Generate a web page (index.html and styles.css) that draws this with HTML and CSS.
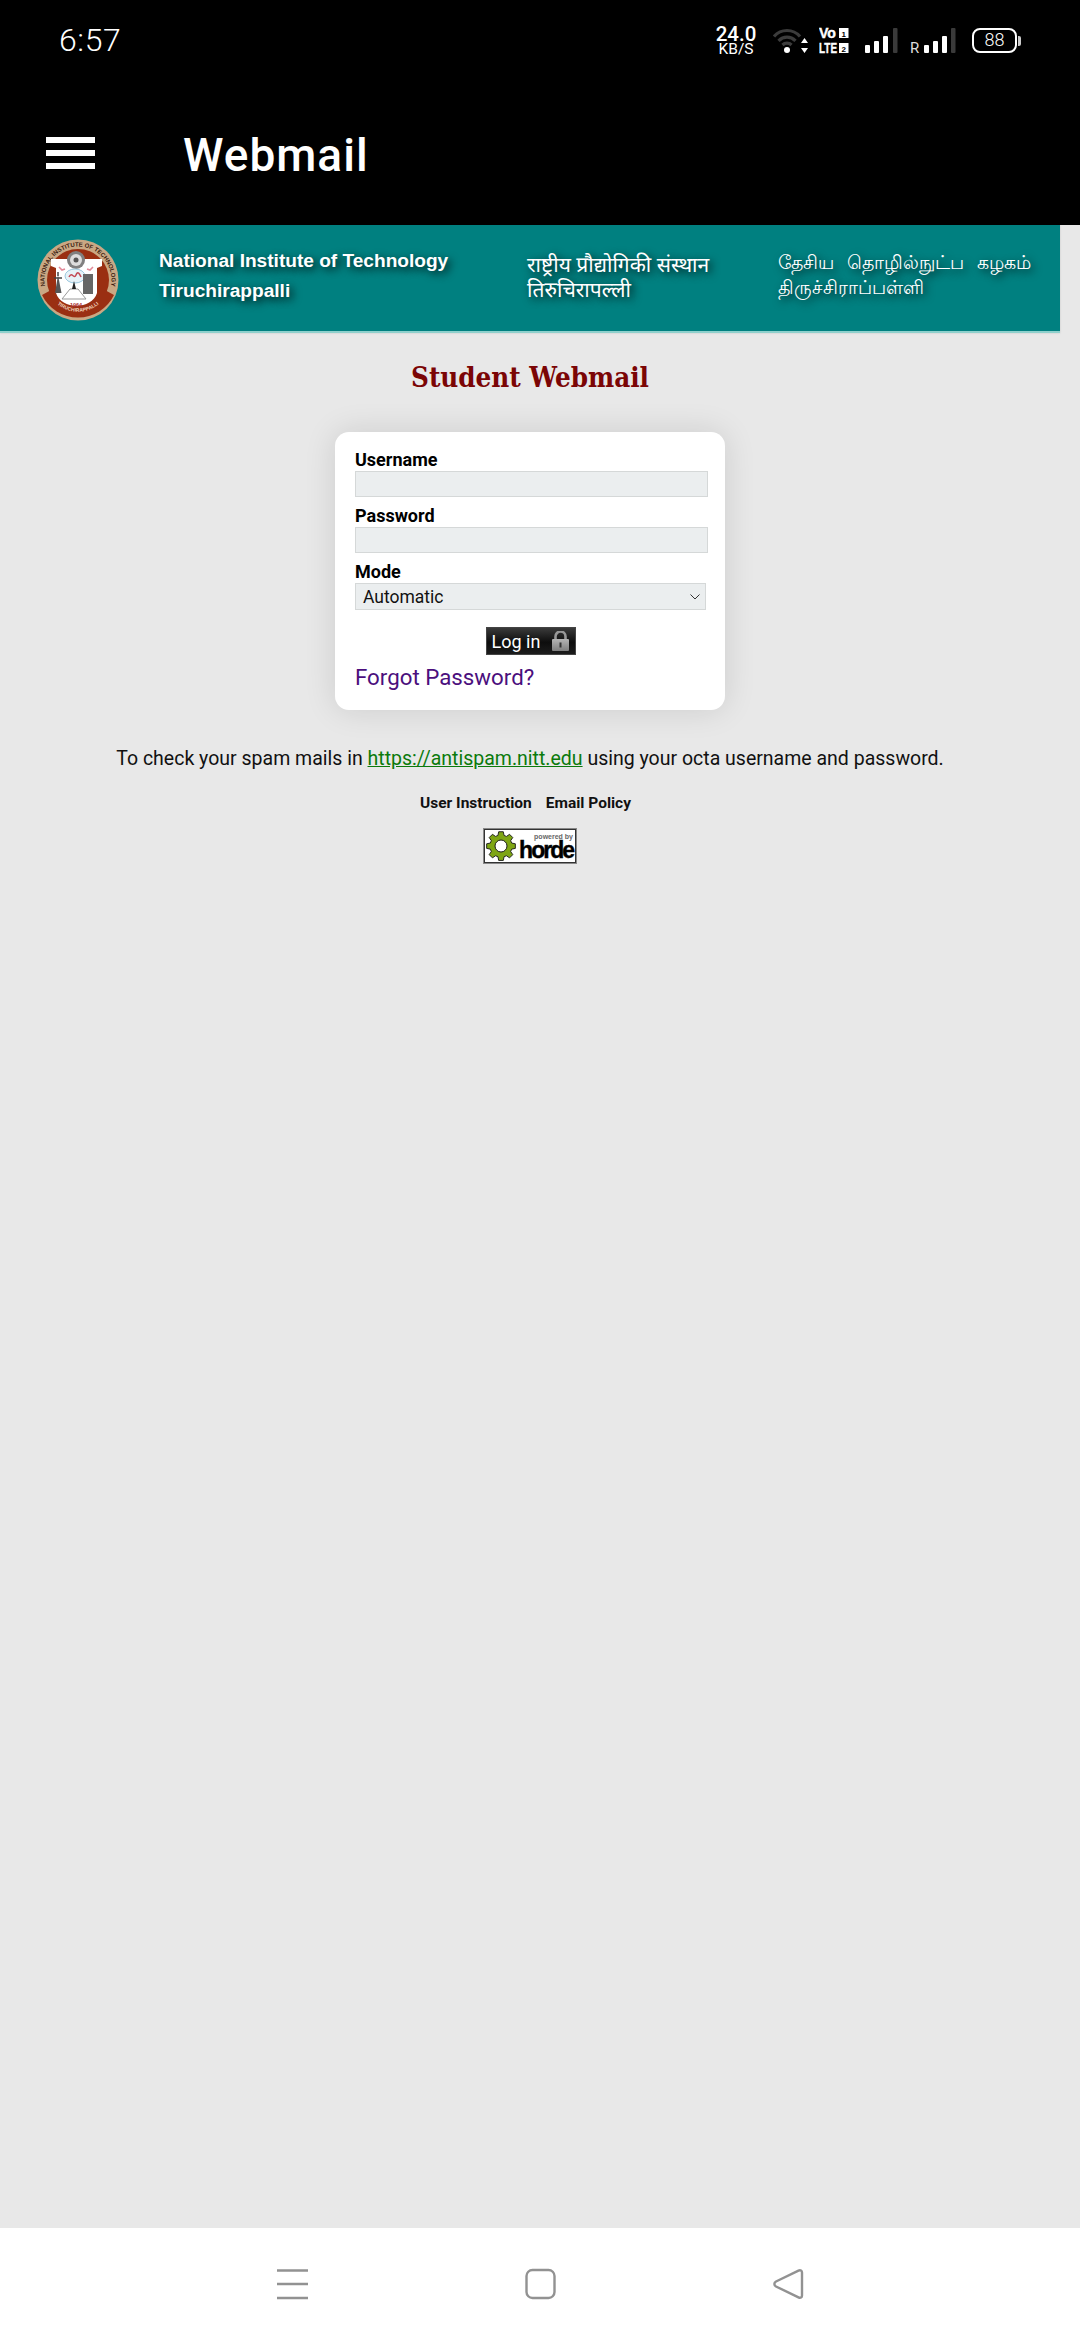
FILE: index.html
```html
<!DOCTYPE html>
<html lang="en">
<head>
<meta charset="utf-8">
<title>Webmail</title>
<link rel="stylesheet" href="styles.css">
</head>
<body>
<div class="phone">
  <header class="top">
    <div class="status">
      <span class="time">6:57</span>
      <div class="status-icons">
        <div class="speed"><span class="speed-num">24.0</span><span class="speed-unit">KB/S</span></div>
        <svg class="ic-wifi" width="35" height="25" viewBox="0 0 35 25">
          <g fill="none" stroke="#3c3c3c" stroke-width="3.200">
            <path d="M1 8.500C8 .5 20 .5 27 8.500"/>
            <path d="M5.500 12.800C10.500 7.800 17.500 7.800 22.500 12.800"/>
            <path d="M9.500 17C12 14.500 16 14.500 18.500 17"/>
          </g>
          <circle cx="14" cy="22" r="3" fill="#fff"/>
          <path d="M31.500 10L35 15H28zM31.500 25L28 20H35z" fill="#fff"/>
        </svg>
        <svg class="ic-volte" width="31" height="33" viewBox="0 -4 31 33">
          <text x="0" y="10" class="vl" textLength="17" lengthAdjust="spacingAndGlyphs">Vo</text>
          <text x="0" y="25" class="vl" textLength="18" lengthAdjust="spacingAndGlyphs">LTE</text>
          <rect x="20" y="0" width="9.500" height="10" fill="#fff"/>
          <rect x="20" y="15" width="9.500" height="10" fill="#fff"/>
          <text x="24.700" y="8.500" class="vn">1</text>
          <text x="24.700" y="23.500" class="vn">2</text>
        </svg>
        <svg class="ic-signal" width="33" height="25" viewBox="0 0 33 25">
          <rect x="0" y="17" width="5" height="8" rx="1" fill="#fff"/>
          <rect x="9" y="13" width="5" height="12" rx="1" fill="#fff"/>
          <rect x="18" y="8" width="5" height="17" rx="1" fill="#fff"/>
          <rect x="28" y="0" width="4.500" height="25" rx="1" fill="#3a3a3a"/>
        </svg>
        <svg class="ic-signal-r" width="46" height="33" viewBox="0 -4 46 33">
          <text x="0" y="25" class="roam">R</text>
          <rect x="14" y="17" width="5" height="8" rx="1" fill="#fff"/>
          <rect x="23" y="13" width="5" height="12" rx="1" fill="#fff"/>
          <rect x="32" y="8" width="5" height="17" rx="1" fill="#fff"/>
          <rect x="41" y="0" width="4.500" height="25" rx="1" fill="#3a3a3a"/>
        </svg>
        <div class="battery"><div class="battery-body">88</div><div class="battery-tip"></div></div>
      </div>
    </div>
    <div class="appbar">
      <div class="burger"><span></span><span></span><span></span></div>
      <h1 class="app-title">Webmail</h1>
    </div>
  </header>

  <main class="web">
    <div class="banner">
      <svg class="crest" width="82" height="82" viewBox="0 0 82 82">
        <defs>
          <path id="arcTop" d="M11.400 56.700A33.500 33.500 0 1 1 70.600 56.700"/>
          <path id="arcBottom" d="M14 58A32 32 0 0 0 68 58"/>
        </defs>
        <circle cx="41" cy="41" r="40.500" fill="#c9a884"/>
        <circle cx="41" cy="41" r="31" fill="#9a2f12"/>
        <path d="M5 56A40 40 0 0 0 77 56L66 50H16z" fill="#9a2f12"/>
        <text class="crest-t"><textPath href="#arcTop" startOffset="50%">NATIONAL INSTITUTE OF TECHNOLOGY</textPath></text>
        <text class="crest-b"><textPath href="#arcBottom" startOffset="50%">TIRUCHIRAPPALLI</textPath></text>
        <path d="M14 20H65V27L60 29V54C55 71 24 71 19 54V29L14 27z" fill="#fff"/>
        <circle cx="39" cy="21" r="9" fill="#808080"/>
        <circle cx="39" cy="21" r="6" fill="#ddd"/>
        <circle cx="39" cy="21" r="2.500" fill="#555"/>
        <ellipse cx="38" cy="37" rx="10" ry="7" fill="#e6f2f8" stroke="#9cc8df"/>
        <path d="M32 38c3-6 5 3 7-2s4 0 5 2" stroke="#c24a55" stroke-width="1.500" fill="none"/>
        <path d="M22 28l3 3 3-1M56 28l-3 3-3-1" stroke="#e28a9a" stroke-width="1.600" fill="none"/>
        <path d="M21 36l-3 18h6.500z" fill="#555"/>
        <path d="M21 37v-4M17 39h8" stroke="#444" stroke-width="1.500"/>
        <rect x="46" y="35" width="10" height="20" fill="#666"/>
        <path d="M25 60l8-10h8l8 10z" fill="#fff" stroke="#999"/>
        <path d="M35 50l2-8 2 8z" fill="#222"/>
        <text x="39" y="67.500" class="crest-y">1964</text>
      </svg>
      <div class="b-col b-en">National Institute of Technology<br>Tiruchirappalli</div>
      <div class="b-col b-hi" lang="hi">राष्ट्रीय प्रौद्योगिकी संस्थान<br>तिरुचिरापल्ली</div>
      <div class="b-col b-ta" lang="ta">தேசிய தொழில்நுட்ப கழகம்<br>திருச்சிராப்பள்ளி</div>
    </div>

    <h2 class="page-title">Student Webmail</h2>

    <form class="card">
      <label class="f-label">Username</label>
      <div class="f-input"></div>
      <label class="f-label">Password</label>
      <div class="f-input"></div>
      <label class="f-label">Mode</label>
      <div class="f-select">
        <span>Automatic</span>
        <svg width="10" height="6" viewBox="0 0 10 6"><path d="M.5.500L5 5 9.500.500" fill="none" stroke="#333" stroke-width="1"/></svg>
      </div>
      <div class="btn-row">
        <div class="btn">
          <span>Log in</span>
          <svg width="17" height="20" viewBox="0 0 17 20">
            <defs><linearGradient id="lockG" x1="0" y1="0" x2="0" y2="1"><stop offset="0" stop-color="#b4b4b4"/><stop offset="1" stop-color="#7e7e7e"/></linearGradient></defs>
            <path d="M3.500 9V5.500a5 5 0 0 1 10 0V9" fill="none" stroke="#989898" stroke-width="2.600"/>
            <rect x="0" y="8" width="17" height="12" rx="1" fill="url(#lockG)"/>
            <rect x="7.500" y="11.500" width="2" height="5" fill="#333"/>
          </svg>
        </div>
      </div>
      <a class="forgot" href="#">Forgot Password?</a>
    </form>

    <p class="spam">To check your spam mails in <a href="#">https://antispam.nitt.edu</a> using your octa username and password.</p>

    <div class="links"><span>User Instruction</span><span>Email Policy</span></div>

    <div class="horde">
      <svg width="30" height="30" viewBox="0 0 30 30" class="gear">
        <path d="M12.500 1.500h5l.8 4 2.600 1.100 3.400-2.300 3.500 3.500-2.300 3.400 1.100 2.600 4 .8v5l-4 .8-1.100 2.600 2.300 3.400-3.500 3.500-3.400-2.300-2.600 1.100-.8 4h-5l-.8-4-2.600-1.100-3.400 2.300-3.500-3.500 2.300-3.400-1.100-2.600-4-.8v-5l4-.8 1.100-2.600-2.300-3.400 3.500-3.500 3.400 2.300 2.600-1.100z" transform="translate(15 15) scale(.92) translate(-15 -17)" fill="#7ea514" stroke="#1a1a1a" stroke-width="1"/>
        <circle cx="15" cy="15" r="6" fill="#fff" stroke="#1a1a1a" stroke-width="1"/>
      </svg>
      <div class="horde-text"><span class="h-pow">powered by</span><span class="h-name">horde</span></div>
    </div>
  </main>

  <nav class="navbar">
    <svg width="31" height="32" viewBox="0 0 31 32"><path d="M0 2.500H31M0 16H31M0 30H31" stroke="#929292" stroke-width="2.600"/></svg>
    <svg width="31" height="32" viewBox="0 0 31 32"><rect x="1.500" y="2" width="28" height="28" rx="6" fill="none" stroke="#929292" stroke-width="2.400"/></svg>
    <svg width="31" height="32" viewBox="0 0 31 32"><path d="M3 13.500L25.500 2.600c2-1 3.500 0 3.500 2V27.400c0 2-1.500 3-3.500 2L3 18.500c-2.200-1.300-2.200-3.700 0-5z" fill="none" stroke="#929292" stroke-width="2.400"/></svg>
  </nav>
</div>
</body>
</html>
```
FILE: styles.css
```css
* { box-sizing: border-box; }
html, body { margin: 0; padding: 0; }
body { font-family: Roboto, "Liberation Sans", sans-serif; background: #e8e8e8; }
.phone { width: 1080px; height: 2340px; display: flex; flex-direction: column; overflow: hidden; }

.top { background: #000; height: 225px; flex: none; color: #fff; }
.status { height: 103px; display: flex; align-items: flex-start; justify-content: space-between; padding: 0 0 0 59px; }
.time { font-size: 32px; font-weight: 300; line-height: 36px; letter-spacing: .6px; margin-top: 22px; }
.status-icons { display: flex; align-items: flex-start; padding: 28px 59px 0 0; }
.speed { display: flex; flex-direction: column; align-items: center; width: 42px; margin-top: -2px; }
.speed-num { font-size: 20.500px; font-weight: 500; line-height: 17px; }
.speed-unit { font-size: 15.500px; font-weight: 400; line-height: 13px; }
.ic-wifi { margin-left: 16px; }
.ic-volte { margin: -4px 0 0 11px; }
.ic-signal { margin-left: 15px; }
.ic-signal-r { margin: -4px 0 0 12px; }
.vl { font: 700 14px "Liberation Sans", sans-serif; fill: #fff; stroke: #fff; stroke-width: .4px; }
.vn { font: 700 8px "Liberation Sans", sans-serif; fill: #000; text-anchor: middle; }
.roam { font: 400 15px Roboto, sans-serif; fill: #ddd; }
.battery { display: flex; align-items: center; margin-left: 16px; }
.battery-body { width: 45px; height: 25px; border: 2.500px solid #fff; border-radius: 8px; font-size: 18px; font-weight: 300; line-height: 20px; text-align: center; }
.battery-tip { width: 3px; height: 10px; background: #ccc; border-radius: 0 2px 2px 0; margin-left: 1px; }

.appbar { display: flex; align-items: center; height: 100px; padding-left: 46px; }
.burger { width: 49px; display: flex; flex-direction: column; gap: 7.500px; }
.burger span { display: block; height: 5.500px; background: #fff; }
.app-title { margin: 3px 0 0 88px; font-size: 46px; font-weight: 500; letter-spacing: 1px; line-height: 50px; }

.web { flex: 1; width: 1060px; display: flex; flex-direction: column; align-items: center; }
.banner { width: 1060px; height: 108px; flex: none; background: #008080; border-bottom: 2px solid #8fd0cc; display: flex; align-items: flex-start; color: #fff; font-family: "Liberation Sans", sans-serif; text-shadow: 3px 3px 8px rgba(0,0,0,.85); box-shadow: 0 0 2px rgba(0,0,0,.15); }
.crest { flex: none; margin: 14px 0 0 37px; }
.crest-t { font: 700 6px "Liberation Sans", sans-serif; fill: #3a1c10; text-anchor: middle; text-shadow: none; }
.crest-b { font: 700 5px "Liberation Sans", sans-serif; fill: #f3d7c0; text-anchor: middle; text-shadow: none; }
.crest-y { font: 700 5.500px "Liberation Sans", sans-serif; fill: #a33; text-anchor: middle; text-shadow: none; }
.b-col { flex: none; }
.b-en { margin: 21px 0 0 40px; width: 368px; font-size: 19.100px; font-weight: 700; line-height: 29.500px; }
.b-hi { width: 251px; margin-top: 27px; font-family: "Noto Sans", "DejaVu Sans", sans-serif; font-size: 21px; line-height: 25px; }
.b-ta { margin-top: 24px; width: 264px; font-family: "Noto Sans", "DejaVu Sans", sans-serif; font-size: 18.600px; line-height: 25px; word-spacing: 8px; white-space: nowrap; }

.page-title { margin: 26px 0 0; font-family: "DejaVu Serif Condensed", "DejaVu Serif", serif; font-size: 27.500px; font-weight: 700; line-height: 36px; color: #7b0505; }

.card { width: 390px; height: 278px; margin-top: 37px; background: #fff; border-radius: 14px; padding: 17px 19px 0 20px; display: flex; flex-direction: column; box-shadow: 0 0 32px rgba(0,0,0,.12); }
.f-label { font-size: 18px; font-weight: 700; line-height: 22px; color: #000; }
.f-input { height: 26px; width: 353px; background: #ebeeef; border: 1px solid #d5d8d8; margin-bottom: 8px; flex: none; }
.f-select { height: 27px; width: 351px; background: #ebeeef; border: 1px solid #d5d8d8; display: flex; align-items: center; justify-content: space-between; padding: 0 5px 0 7px; font-size: 17.500px; color: #111; flex: none; }
.btn-row { display: flex; justify-content: center; margin-top: 17px; }
.btn { width: 90px; height: 28px; display: flex; align-items: center; justify-content: space-between; padding: 0 6px 0 5px; color: #fff; font-size: 18px; background: linear-gradient(#3a3a3a, #0d0d0d 55%, #1c1c1c); border: 1px solid #444; }
.forgot { margin-top: 7px; font-size: 22.300px; line-height: 30px; color: #4b0f7d; text-decoration: none; }

.spam { margin: 36px 0 0; font-size: 19.500px; line-height: 26px; color: #111; }
.spam a { color: #0b7a0b; }

.links { display: flex; gap: 14px; margin: 22px 9px 0 0; font-size: 15.500px; font-weight: 700; line-height: 18px; color: #111; }

.horde { width: 92px; height: 34px; margin-top: 17px; background: #fff; border: 1px solid #333; outline: 1px solid #888; display: flex; align-items: center; padding-left: 1px; }
.gear { flex: none; }
.horde-text { display: flex; flex-direction: column; align-items: flex-end; flex: 1; padding-right: 2px; }
.h-pow { font-family: "Liberation Sans", sans-serif; font-size: 7px; font-weight: 700; color: #666; line-height: 7px; }
.h-name { font-family: "Liberation Sans", sans-serif; font-size: 23px; font-weight: 700; letter-spacing: -2px; color: #000; line-height: 20px; -webkit-text-stroke: .4px #000; }

.navbar { height: 112px; flex: none; background: #fff; display: flex; align-items: flex-start; justify-content: center; gap: 217px; padding-top: 40px; }
```
